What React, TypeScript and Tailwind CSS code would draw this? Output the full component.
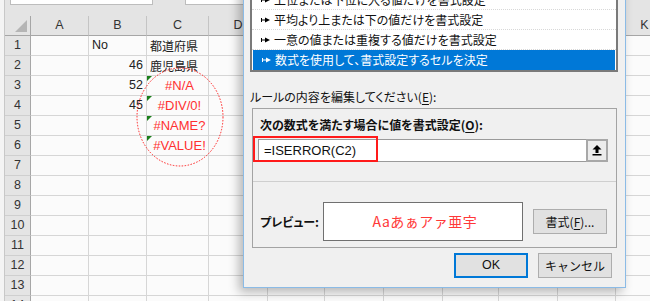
import React from 'react';

const jp = "font-['Noto_Sans_CJK_JP',sans-serif]";
const latin = "font-['Liberation_Sans','Noto_Sans_CJK_JP',sans-serif]";

const cols = [
  { l: 'A', w: 'w-[58px]' },
  { l: 'B', w: 'w-[58px]' },
  { l: 'C', w: 'w-[62px]' },
  { l: 'D', w: 'w-[59px]' },
  { l: 'E', w: 'w-[57px]' },
  { l: 'F', w: 'w-[59px]' },
  { l: 'G', w: 'w-[59px]' },
  { l: 'H', w: 'w-[56px]' },
  { l: 'I', w: 'w-[59px]' },
  { l: 'J', w: 'w-[58px]' },
  { l: 'K', w: 'w-[58px]' },
];

type Cell = { text: string; kind: 'left' | 'num' | 'jp' | 'err' };
const data: Record<number, Record<string, Cell>> = {
  1: { B: { text: 'No', kind: 'left' }, C: { text: '都道府県', kind: 'jp' } },
  2: { B: { text: '46', kind: 'num' }, C: { text: '鹿児島県', kind: 'jp' } },
  3: { B: { text: '52', kind: 'num' }, C: { text: '#N/A', kind: 'err' } },
  4: { B: { text: '45', kind: 'num' }, C: { text: '#DIV/0!', kind: 'err' } },
  5: { C: { text: '#NAME?', kind: 'err' } },
  6: { C: { text: '#VALUE!', kind: 'err' } },
};

const rules = [
  '指定の値を含むセルだけを書式設定',
  '上位または下位に入る値だけを書式設定',
  '平均より上または下の値だけを書式設定',
  '一意の値または重複する値だけを書式設定',
  '数式を使用して、書式設定するセルを決定',
];

function RuleArrow({ white }: { white?: boolean }) {
  const c = white ? '#ffffff' : '#000000';
  return (
    <svg width="9" height="6" viewBox="0 0 9 6" className="shrink-0">
      <rect x="0" y="1" width="1" height="4" fill={c} />
      <rect x="0" y="2.5" width="5" height="1" fill={c} />
      <polygon points="4,0.5 9,3 4,5.5" fill={c} />
    </svg>
  );
}

function CellView({ cell }: { cell?: Cell }) {
  if (!cell) return null;
  if (cell.kind === 'err') {
    return (
      <>
        <span className="absolute left-0 top-0 w-0 h-0 border-t-[5px] border-r-[5px] border-t-[#1a7f1a] border-r-transparent" />
        <span className={`w-full text-center pl-[4px] text-[13px] text-[#ff3030] ${latin}`}>{cell.text}</span>
      </>
    );
  }
  if (cell.kind === 'num') {
    return <span className={`w-full text-right pr-[3px] text-[12.5px] text-[#222] ${latin}`}>{cell.text}</span>;
  }
  if (cell.kind === 'jp') {
    return <span className={`pl-[3px] text-[12px] text-[#222] whitespace-nowrap ${jp}`}>{cell.text}</span>;
  }
  return <span className={`pl-[3px] text-[12.5px] text-[#222] ${latin}`}>{cell.text}</span>;
}

function Sheet() {
  const rows = Array.from({ length: 14 }, (_, i) => i + 1);
  return (
    <div className="flex flex-col w-max">
      {/* name box / formula bar strip */}
      <div className="flex h-[16px] bg-[#e4e4e4]">
        <div className="w-[5px] shrink-0 bg-[#f4f4f4] border-r border-[#c8c8c8]" />
        <div className="ml-[5px] w-[143px] shrink-0 h-[5px] bg-white border-b border-x border-[#bdbdbd]" />
        <div className="ml-[32px] w-[80px] shrink-0 h-[5px] bg-white border-b border-l border-[#bdbdbd]" />
      </div>
      {/* column header */}
      <div className="flex h-[20px]">
        <div className="w-[5px] shrink-0 bg-[#f4f4f4] border-r border-[#c8c8c8]" />
        <div className="relative w-[26px] shrink-0 bg-[#e4e4e4] border-r border-b border-[#a6a6a6]">
          <span className="absolute right-[3px] bottom-[3px] w-0 h-0 border-b-[12px] border-l-[12px] border-b-[#b5b5b5] border-l-transparent" />
        </div>
        {cols.map((c) => (
          <div
            key={c.l}
            className={`${c.w} shrink-0 flex items-center justify-center bg-[#e4e4e4] border-r border-r-[#c4c4c4] border-b border-b-[#a6a6a6] text-[12.5px] text-[#333] ${latin}`}
          >
            {c.l}
          </div>
        ))}
      </div>
      {rows.map((r) => (
        <div key={r} className="flex h-[20px]">
          <div className="w-[5px] shrink-0 bg-[#f4f4f4] border-r border-[#c8c8c8]" />
          <div className={`w-[26px] shrink-0 flex items-center justify-center bg-[#e4e4e4] border-r border-r-[#a6a6a6] border-b border-b-[#cfcfcf] text-[12.5px] text-[#333] ${latin}`}>
            {r}
          </div>
          {cols.map((c) => (
            <div
              key={c.l}
              className={`${c.w} shrink-0 relative flex items-center bg-[#fbfbfb] border-r border-b border-[#d6d6d6]`}
            >
              <CellView cell={data[r]?.[c.l]} />
            </div>
          ))}
        </div>
      ))}
    </div>
  );
}

function Dialog() {
  return (
    <div className={`absolute left-[243px] top-[-40px] w-[383px] flex flex-col bg-[#f0f0f0] border border-[#8bbbe6] shadow-[-4px_4px_10px_rgba(0,0,0,0.28)] px-[6px] pb-[9px] ${jp}`}>
      {/* rule type list */}
      <div className="mt-[7px] w-[368px] border-2 border-[#7a7a7a] bg-white">
        {rules.map((t, i) => {
          const sel = i === rules.length - 1;
          return (
            <div
              key={t}
              className={`h-[20px] flex items-center gap-[4px] pl-[9px] text-[12px] [font-feature-settings:'palt'] whitespace-nowrap ${
                sel ? 'bg-[#0078d7] text-white mx-px' : 'text-[#111] border-b border-dotted border-[#d8d8d8]'
              }`}
            >
              <RuleArrow white={sel} />
              <span className="leading-none">{t}</span>
            </div>
          );
        })}
      </div>

      {/* edit label */}
      <div className="mt-[16px] h-[18px] flex items-center text-[12px] text-[#111] [font-feature-settings:'palt']">
        ルールの内容を編集してください(<span className="underline underline-offset-2">E</span>):
      </div>

      {/* rule description group */}
      <div className="relative mt-[2px] ml-[2px] w-[365px] flex flex-col border border-[#a3a3a3] pt-[7px] pb-[6px]">
        <div className="pl-[7px] h-[18px] flex items-center text-[12px] font-bold text-[#111] [font-feature-settings:'palt']">
          次の数式を満たす場合に値を書式設定(<span className="underline underline-offset-2">O</span>):
        </div>
        <div className="mt-[5px] ml-[5px] w-[350px] h-[23px] flex items-center bg-white border border-[#9a9a9a]">
          <span className={`pl-[5px] text-[13px] text-[#111] ${latin}`}>=ISERROR(C2)</span>
          <div className="ml-auto mr-[-1px] w-[22px] h-[23px] flex items-center justify-center bg-[#ececec] border-2 border-[#a8a8a8]">
            <svg width="10" height="11" viewBox="0 0 10 11">
              <polygon points="5,0 0.5,4.5 9.5,4.5" fill="#000" />
              <rect x="3.5" y="4" width="3" height="4" fill="#000" />
              <rect x="0.5" y="9" width="9" height="1.5" fill="#000" />
            </svg>
          </div>
        </div>
        {/* highlight annotation */}
        <div className="absolute left-[0px] top-[27px] w-[125px] h-[26px] border-2 border-[#ff1a1a]" />
        <div className="mt-[19px] h-px bg-[#cfcfcf]" />
        <div className="mt-[20px] h-[39px] flex items-center">
          <span className="pl-[7px] w-[70px] text-[12px] font-bold text-[#111] [font-feature-settings:'palt']">プレビュー:</span>
          <div className="w-[200px] h-[39px] flex items-center justify-center bg-white border border-[#707070]">
            <span className="pl-[4px] text-[14px] text-[#ff3838] tracking-[0.5px]">Aaあぁアァ亜宇</span>
          </div>
          <button className="ml-[10px] w-[74px] h-[25px] flex items-center justify-center bg-[#e1e1e1] border border-[#adadad] text-[12px] text-[#111]">
            書式(<span className="underline underline-offset-2">F</span>)...
          </button>
        </div>
      </div>

      {/* dialog buttons */}
      <div className="mt-[5px] flex justify-end gap-[10px] pr-[7px]">
        <button className={`w-[74px] h-[25px] flex items-center justify-center bg-[#e1e1e1] border-2 border-[#0078d7] text-[12.5px] text-[#111] ${latin}`}>
          OK
        </button>
        <button className="w-[74px] h-[25px] flex items-center justify-center bg-[#e1e1e1] border border-[#adadad] text-[12px] text-[#111]">
          キャンセル
        </button>
      </div>
    </div>
  );
}

export default function App() {
  return (
    <div className="relative w-[650px] h-[301px] overflow-hidden bg-white">
      <Sheet />
      {/* error cells annotation */}
      <svg className="absolute left-[136px] top-[67px]" width="88" height="100" viewBox="0 0 88 100">
        <ellipse cx="44" cy="50" rx="43" ry="49" fill="none" stroke="#ff2020" strokeWidth="1" strokeDasharray="1.5 1.5" />
      </svg>
      <Dialog />
    </div>
  );
}
